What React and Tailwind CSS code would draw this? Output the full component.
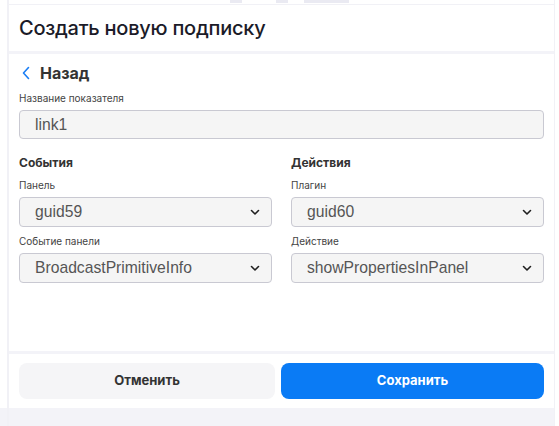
import React from "react";

function Chevron() {
  return (
    <svg width="10" height="7" viewBox="0 0 10 7" fill="none">
      <path d="M1.5 1.5 L5 5 L8.5 1.5" stroke="#1f1f1f" strokeWidth="1.6" strokeLinecap="round" strokeLinejoin="round" />
    </svg>
  );
}

function Field({ value, chevron, h }) {
  return (
    <div className={`${h} rounded-[4px] border border-[#c9c9d2] bg-[#f5f5f5] flex items-center justify-between pl-[15px] pr-[11px]`}>
      <span className="text-[15.7px] text-[#555] leading-none" style={{ fontFamily: '"Liberation Sans", Arial, sans-serif' }}>{value}</span>
      {chevron ? <Chevron /> : null}
    </div>
  );
}

function Label({ children }) {
  return <div className="h-[12px] text-[10px] leading-[12px] text-[#444]">{children}</div>;
}

export default function App() {
  return (
    <div className="w-[559px] h-[426px] flex bg-white overflow-hidden" style={{ fontFamily: 'Inter, "Noto Sans", sans-serif' }}>
      <div className="w-[7px] h-full flex flex-col">
        <div className="flex-1 bg-white" />
        <div className="h-[18px] bg-[#f3f3f8]" />
      </div>
      <div className="w-[2px] h-full bg-[#f1f1f6]" />
      <div className="w-[545px] h-full flex flex-col">
        <div className="h-[4px] relative bg-white">
          <div className="absolute left-[221px] top-0 w-[12px] h-[3px] bg-[#eaeaf2]" />
          <div className="absolute left-[267px] top-0 w-[12px] h-[3px] bg-[#eaeaf2]" />
          <div className="absolute left-[295px] top-0 w-[45px] h-[3px] bg-[#eaeaf2]" />
        </div>
        <div className="h-[1px] bg-[#f1f1f6]" />
        <div className="h-[46px] flex items-center pl-[10px]">
          <span className="text-[20px] font-medium text-[#1b1b28] tracking-[-0.25px]">Создать новую подписку</span>
        </div>
        <div className="h-[3px] bg-[#f3f3f8]" />
        <div className="flex-1 px-[10px]">
          <div className="h-[38px] flex items-center">
            <svg width="10" height="14" viewBox="0 0 10 14" className="ml-[2px]" fill="none">
              <path d="M7.5 1.5 L2.5 7 L7.5 12.5" stroke="#1a7ef5" strokeWidth="1.6" strokeLinecap="round" strokeLinejoin="round" />
            </svg>
            <span className="ml-[9px] text-[16px] font-bold text-[#333]">Назад</span>
          </div>
          <Label>Название показателя</Label>
          <div className="mt-[6px]">
            <Field value="link1" h="h-[29px]" />
          </div>
          <div className="mt-[16px] grid grid-cols-2 gap-x-[19px]">
            <div>
              <div className="h-[16px] text-[12px] leading-[16px] font-bold text-[#333]">События</div>
              <div className="mt-[8px]"><Label>Панель</Label></div>
              <div className="mt-[6px]"><Field value="guid59" chevron h="h-[30px]" /></div>
              <div className="mt-[8px]"><Label>Событие панели</Label></div>
              <div className="mt-[6px]"><Field value="BroadcastPrimitiveInfo" chevron h="h-[30px]" /></div>
            </div>
            <div>
              <div className="h-[16px] text-[12px] leading-[16px] font-bold text-[#333]">Действия</div>
              <div className="mt-[8px]"><Label>Плагин</Label></div>
              <div className="mt-[6px]"><Field value="guid60" chevron h="h-[30px]" /></div>
              <div className="mt-[8px]"><Label>Действие</Label></div>
              <div className="mt-[6px]"><Field value="showPropertiesInPanel" chevron h="h-[30px]" /></div>
            </div>
          </div>
        </div>
        <div className="h-[3px] bg-[#f3f3f8]" />
        <div className="h-[54px] flex items-start gap-[6px] px-[10px] pt-[9px]">
          <button className="w-[256px] h-[36px] rounded-[8px] bg-[#f5f5f7] text-[13px] font-bold text-[#333]">Отменить</button>
          <button className="flex-1 h-[36px] rounded-[8px] bg-[#0a7bf5] text-[13px] font-bold text-white">Сохранить</button>
        </div>
        <div className="h-[18px] bg-[#f3f3f8]" />
      </div>
      <div className="w-[1px] h-full bg-[#f1f1f6]" />
      <div className="flex-1 bg-white" />
    </div>
  );
}
